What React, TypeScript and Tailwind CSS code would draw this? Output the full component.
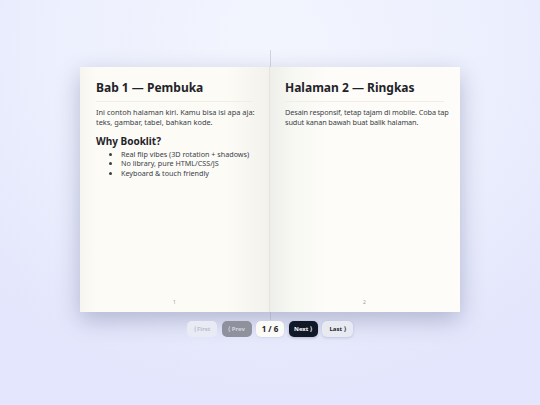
import React from 'react'

const font = { fontFamily: '"Noto Sans", "Open Sans", sans-serif' }

function Page({
  side,
  number,
  children,
}: {
  side: 'left' | 'right'
  number: number
  children: React.ReactNode
}) {
  const shade =
    side === 'left'
      ? 'pl-[16px] pr-[10px] border-r border-[#e4e3de] bg-[linear-gradient(to_right,#f6f5ef_0%,#fcfbf6_8%,#fcfbf6_78%,#f2f1ec_100%)]'
      : 'pl-[15px] pr-[6px] bg-[linear-gradient(to_right,#eeeeea_0%,#f8f8f3_12%,#fdfcf8_30%,#fdfcf8_100%)]'
  return (
    <div className={`relative w-[190px] flex flex-col pt-[12px] ${shade}`}>
      <div className="flex-1">{children}</div>
      <div className={`text-center text-[5px] text-gray-400 pb-1.5 ${side === 'left' ? 'pr-[6px]' : 'pr-[10px]'}`}>
        {number}
      </div>
    </div>
  )
}

function Heading({ children }: { children: React.ReactNode }) {
  return (
    <h1 className="text-[12px] leading-[18px] font-bold text-[#1f2329] pb-1 border-b border-[#efeee8] mr-[6px]">
      {children}
    </h1>
  )
}

export default function App() {
  return (
    <div
      style={font}
      className="w-[540px] h-[405px] overflow-hidden relative bg-[radial-gradient(ellipse_75%_90%_at_50%_10%,#f3f5fe_0%,#eceffd_55%,#e3e6fc_100%)] flex flex-col items-center pt-[67px]"
    >
      {/* spine line */}
      <div className="absolute left-[270px] top-[50px] h-[270px] w-px bg-[#d3d4dc]" />

      {/* Book */}
      <div className="relative w-[380px] h-[245px] flex shadow-[0_8px_22px_rgba(40,45,95,0.28)]">
        <Page side="left" number={1}>
          <Heading>Bab 1 — Pembuka</Heading>
          <p className="mt-[5px] text-[7.4px] leading-[10px] text-[#3a3f47]">
            Ini contoh halaman kiri. Kamu bisa isi apa aja: teks, gambar, tabel, bahkan kode.
          </p>
          <h2 className="mt-[7px] text-[10px] leading-[14px] font-bold text-[#1f2329]">Why Booklit?</h2>
          <ul className="mt-[1.5px] pl-[25px] list-disc text-[7.2px] leading-[9.5px] text-[#3a3f47]">
            <li>Real flip vibes (3D rotation + shadows)</li>
            <li>No library, pure HTML/CSS/JS</li>
            <li>Keyboard &amp; touch friendly</li>
          </ul>
        </Page>
        <Page side="right" number={2}>
          <div className="mr-[4px]">
            <Heading>Halaman 2 — Ringkas</Heading>
          </div>
          <p className="mt-[5px] text-[7.3px] leading-[10px] tracking-[-0.1px] text-[#3a3f47]">
            Desain responsif, tetap tajam di mobile. Coba tap sudut kanan bawah buat balik halaman.
          </p>
        </Page>
      </div>

      {/* Controls */}
      <div className="relative mt-[9px] flex items-center gap-[4.5px] text-[6px] font-bold">
        <button className="h-[16px] w-[30px] rounded-[5px] bg-[#e9ebf4] text-[#b9bdcc]">⟨ First</button>
        <button className="h-[16px] w-[30px] rounded-[5px] bg-[#8f929d] text-[#d3d5dd]">⟨ Prev</button>
        <div className="h-[16px] w-[28px] rounded-[5px] bg-[#fafaf7] text-[#1f2329] text-[8px] flex items-center justify-center shadow-[0_1px_2px_rgba(0,0,0,0.06)]">
          1 / 6
        </div>
        <button className="h-[16px] w-[29px] rounded-[5px] bg-[#111827] text-white shadow-[0_1px_3px_rgba(0,0,0,0.2)]">Next ⟩</button>
        <button className="h-[16px] w-[31px] rounded-[5px] bg-[#e8eaf2] text-[#1f2329] shadow-[0_1px_3px_rgba(40,45,95,0.18)]">Last ⟩</button>
      </div>
    </div>
  )
}
